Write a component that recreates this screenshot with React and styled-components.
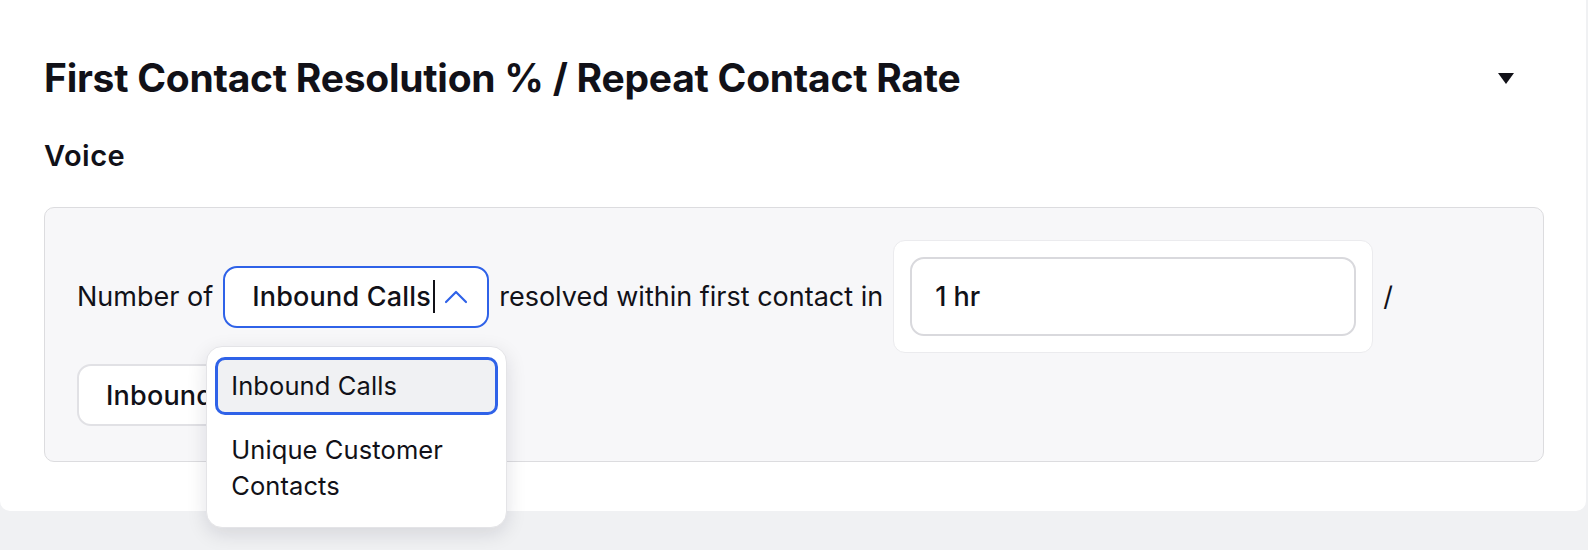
import styled, { createGlobalStyle } from "styled-components";
import { ChevronUp, ChevronDown } from "lucide-react";

const GlobalStyle = createGlobalStyle`
    html, body {
        margin: 0;
        padding: 0;
        background: #f0f1f3;
        font-family: Inter, "Noto Sans", sans-serif;
        color: #111118;
    }
`;

const Page = styled.div`
    min-height: 550px;
    background: #f0f1f3;
`;

const Card = styled.section`
    background: #ffffff;
    border-radius: 0 0 10px 10px;
    padding: 54px 42px 49px 44px;
    margin-right: 2px;
`;

const Header = styled.div`
    display: flex;
    align-items: center;
    justify-content: space-between;
    padding-right: 30px;
`;

const Title = styled.h2`
    margin: 0;
    font-size: 39px;
    line-height: 48px;
    font-weight: 700;
    letter-spacing: -0.25px;
`;

const Caret = styled.span`
    width: 0;
    height: 0;
    border-left: 8px solid transparent;
    border-right: 8px solid transparent;
    border-top: 11px solid #111118;
`;

const Subtitle = styled.h3`
    margin: 38px 0 35px;
    font-size: 29px;
    line-height: 32px;
    font-weight: 600;
    letter-spacing: 0.5px;
`;

const RuleBox = styled.div`
    display: flex;
    flex-wrap: wrap;
    align-items: center;
    column-gap: 10px;
    row-gap: 11px;
    padding: 32px 32px 35px;
    background: #f7f7f9;
    border: 1px solid #dcdcdf;
    border-radius: 10px;
`;

const Label = styled.span`
    font-size: 27px;
    line-height: 32px;
`;

const SelectWrap = styled.div`
    position: relative;
`;

const Select = styled.div`
    box-sizing: border-box;
    display: flex;
    align-items: center;
    width: 266px;
    height: 62px;
    padding: 0 11px 0 27px;
    background: #ffffff;
    border: 2px solid ${({ $open }) => ($open ? "#2f62e8" : "#e1e1e5")};
    border-radius: 14px;
    font-size: 27px;
    font-weight: 500;
    letter-spacing: 0.2px;
    white-space: nowrap;
    overflow: hidden;
`;

const Caption = styled.span`
    flex: 1;
    display: flex;
    align-items: center;
`;

const TextCursor = styled.span`
    display: inline-block;
    width: 2px;
    height: 33px;
    margin-left: 2px;
    background: #111118;
`;

const Menu = styled.ul`
    position: absolute;
    top: 80px;
    left: -17px;
    z-index: 2;
    box-sizing: border-box;
    width: 301px;
    margin: 0;
    padding: 10px 8px 12px;
    list-style: none;
    display: flex;
    flex-direction: column;
    gap: 6px;
    background: #ffffff;
    border: 1px solid #e4e4e7;
    border-radius: 16px;
    box-shadow: 0 6px 20px rgba(20, 20, 40, 0.12);
`;

const Option = styled.li`
    padding: 8px 13px;
    font-size: 25.5px;
    line-height: 36px;
    letter-spacing: 0.1px;
    border: 3px solid ${({ $active }) => ($active ? "#2f62e8" : "transparent")};
    border-radius: 10px;
    background: ${({ $active }) => ($active ? "#f0f1f3" : "transparent")};
`;

const InputFrame = styled.div`
    padding: 16px;
    background: #ffffff;
    border: 1px solid #ebebee;
    border-radius: 12px;
`;

const Input = styled.div`
    box-sizing: border-box;
    display: flex;
    align-items: center;
    width: 446px;
    height: 79px;
    padding: 0 23px;
    border: 2px solid #d9d9dd;
    border-radius: 14px;
    font-size: 27px;
    font-weight: 500;
`;

const options = ["Inbound Calls", "Unique Customer Contacts"];

export default function App() {
    return (
        <Page>
            <GlobalStyle />
            <Card>
                <Header>
                    <Title>First Contact Resolution % / Repeat Contact Rate</Title>
                    <Caret />
                </Header>
                <Subtitle>Voice</Subtitle>
                <RuleBox>
                    <Label>Number of</Label>
                    <SelectWrap>
                        <Select $open>
                            <Caption>
                                Inbound Calls
                                <TextCursor />
                            </Caption>
                            <ChevronUp size={40} color="#2f62e8" strokeWidth={1.3} />
                        </Select>
                        <Menu>
                            {options.map((o, i) => (
                                <Option key={o} $active={i === 0}>
                                    {o}
                                </Option>
                            ))}
                        </Menu>
                    </SelectWrap>
                    <Label>resolved within first contact in</Label>
                    <InputFrame>
                        <Input>1 hr</Input>
                    </InputFrame>
                    <Label>/</Label>
                    <SelectWrap>
                        <Select>
                            <Caption>Inbound Calls</Caption>
                            <ChevronDown size={40} color="#111118" strokeWidth={1.3} />
                        </Select>
                    </SelectWrap>
                </RuleBox>
            </Card>
        </Page>
    );
}
